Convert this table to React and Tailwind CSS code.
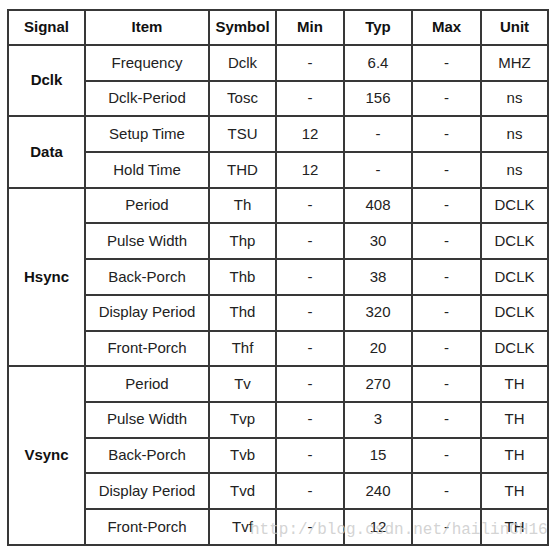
import React from 'react';

const groups = [
  {
    signal: 'Dclk',
    rows: [
      ['Frequency', 'Dclk', '-', '6.4', '-', 'MHZ'],
      ['Dclk-Period', 'Tosc', '-', '156', '-', 'ns'],
    ],
  },
  {
    signal: 'Data',
    rows: [
      ['Setup Time', 'TSU', '12', '-', '-', 'ns'],
      ['Hold Time', 'THD', '12', '-', '-', 'ns'],
    ],
  },
  {
    signal: 'Hsync',
    rows: [
      ['Period', 'Th', '-', '408', '-', 'DCLK'],
      ['Pulse Width', 'Thp', '-', '30', '-', 'DCLK'],
      ['Back-Porch', 'Thb', '-', '38', '-', 'DCLK'],
      ['Display Period', 'Thd', '-', '320', '-', 'DCLK'],
      ['Front-Porch', 'Thf', '-', '20', '-', 'DCLK'],
    ],
  },
  {
    signal: 'Vsync',
    rows: [
      ['Period', 'Tv', '-', '270', '-', 'TH'],
      ['Pulse Width', 'Tvp', '-', '3', '-', 'TH'],
      ['Back-Porch', 'Tvb', '-', '15', '-', 'TH'],
      ['Display Period', 'Tvd', '-', '240', '-', 'TH'],
      ['Front-Porch', 'Tvf', '-', '12', '-', 'TH'],
    ],
  },
];

const headers = ['Signal', 'Item', 'Symbol', 'Min', 'Typ', 'Max', 'Unit'];
const widths = ['w-[77px]', 'w-[124px]', 'w-[67px]', 'w-[68px]', 'w-[68px]', 'w-[69px]', 'w-[67px]'];

const cell = 'border-2 border-[#383838] text-center align-middle p-0';

export default function App() {
  return (
    <div className="relative w-[554px] h-[550px] bg-white font-['Liberation_Sans',Arial,sans-serif] text-[15px] text-[#222]">
      <div className="pt-[9px] pl-[7px]">
        <table className="table-fixed border-collapse w-[542px]">
          <thead>
            <tr className="h-[35px]">
              {headers.map((h, i) => (
                <th key={h} className={`${cell} ${widths[i]} font-bold text-[#111]`}>
                  {h}
                </th>
              ))}
            </tr>
          </thead>
          <tbody>
            {groups.map((g) =>
              g.rows.map((r, i) => (
                <tr key={g.signal + i} className="h-[35.7px]">
                  {i === 0 && (
                    <td rowSpan={g.rows.length} className={`${cell} font-bold text-[#111]`}>
                      {g.signal}
                    </td>
                  )}
                  {r.map((v, j) => (
                    <td key={j} className={cell}>
                      {v}
                    </td>
                  ))}
                </tr>
              ))
            )}
          </tbody>
        </table>
      </div>

      {/* watermark */}
      <div className="absolute left-[250px] top-[518px] font-['Liberation_Mono',monospace] text-[16px] text-[#c8c8c8]/80 whitespace-nowrap pointer-events-none">
        http://blog.csdn.net/hailinCH16
      </div>
    </div>
  );
}
